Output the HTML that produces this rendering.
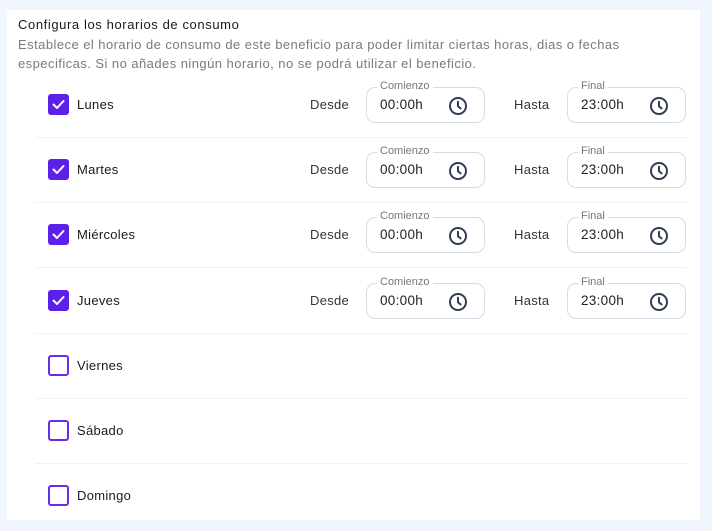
<!DOCTYPE html>
<html><head><meta charset="utf-8"><style>
*{box-sizing:border-box;margin:0;padding:0}
body{width:712px;height:531px;background:#f1f5fe;font-family:"Liberation Sans",sans-serif;position:relative;overflow:hidden}
.card{position:absolute;left:7px;top:10px;width:693px;height:510px;background:#fff}
.t{position:absolute;left:18px;top:17px;font-size:13px;color:#1a1a1a;letter-spacing:0.6px}
.d{position:absolute;left:18px;top:35px;width:630px;font-size:13px;line-height:19px;color:#7a7a7a;letter-spacing:0.45px}
.sep{position:absolute;left:35px;width:651px;height:1px;background:#f0f1f4}
.cb{position:absolute;left:48px;width:21px;height:21px;border-radius:3px;border:2px solid #6a2bf0}
.cb.on{background:#5b21e8;border-color:#5b21e8}
.day{position:absolute;left:77px;font-size:13px;color:#1a1a1a;letter-spacing:0.3px}
.lab{position:absolute;font-size:13px;color:#333;letter-spacing:0.3px}
.in{position:absolute;width:119px;height:36px;border:1px solid #d6dce6;border-radius:9px}
.in .v{position:absolute;left:13px;top:9px;font-size:13.5px;color:#222;letter-spacing:0.3px}
.in .l{position:absolute;left:10px;top:-8px;background:#fff;padding:0 3px;font-size:11px;color:#777}
.in svg{position:absolute;right:16px;top:8px}
</style></head><body>
<div class="card"></div>
<div class="t">Configura los horarios de consumo</div>
<div class="d">Establece el horario de consumo de este beneficio para poder limitar ciertas horas, dias o fechas especificas. Si no añades ningún horario, no se podrá utilizar el beneficio.</div>
<div id="rows"></div>
<script>
var days=["Lunes","Martes","Miércoles","Jueves","Viernes","Sábado","Domingo"];
var clock='<svg width="20" height="20" viewBox="0 0 20 20"><circle cx="10" cy="10" r="8" fill="none" stroke="#2f3d55" stroke-width="2"/><path d="M10 5.8V10.3L12.6 12.4" fill="none" stroke="#2f3d55" stroke-width="2" stroke-linecap="round" stroke-linejoin="round"/></svg>';
var h="";
days.forEach(function(d,i){
 var c=104+i*65.2;
 var on=i<4;
 h+='<div class="cb'+(on?' on':'')+'" style="top:'+(c-10)+'px">'+(on?'<svg width="17" height="17" viewBox="0 0 17 17"><path d="M3.5 8.5L7 12L13.5 5" fill="none" stroke="#fff" stroke-width="2" stroke-linecap="round" stroke-linejoin="round"/></svg>':'')+'</div>';
 h+='<div class="day" style="top:'+(c-7)+'px">'+d+'</div>';
 if(on){
  h+='<div class="lab" style="left:310px;top:'+(c-7)+'px">Desde</div>';
  h+='<div class="in" style="left:366px;top:'+(c-17)+'px"><span class="l">Comienzo</span><span class="v">00:00h</span>'+clock+'</div>';
  h+='<div class="lab" style="left:514px;top:'+(c-7)+'px">Hasta</div>';
  h+='<div class="in" style="left:567px;top:'+(c-17)+'px"><span class="l">Final</span><span class="v">23:00h</span>'+clock+'</div>';
 }
 if(i<6)h+='<div class="sep" style="top:'+(c+33)+'px"></div>';
});
document.getElementById("rows").innerHTML=h;
</script>
</body></html>
